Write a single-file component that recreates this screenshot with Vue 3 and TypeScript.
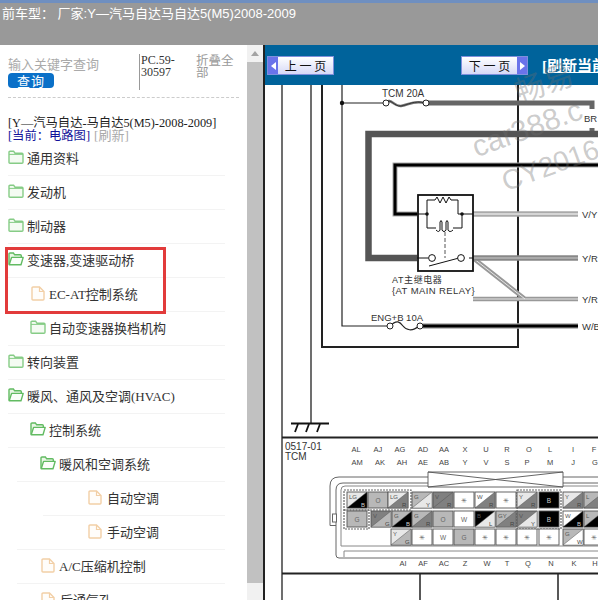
<script setup lang="ts">
interface Row { label: string; kind: 'open' | 'closed' | 'doc'; pad: number; gap: number; line: number }
const rows: Row[] = [
  { label: '通用资料', kind: 'closed', pad: 8, gap: 3, line: 8 },
  { label: '发动机', kind: 'closed', pad: 8, gap: 3, line: 8 },
  { label: '制动器', kind: 'closed', pad: 8, gap: 3, line: 8 },
  { label: '变速器,变速驱动桥', kind: 'open', pad: 8, gap: 3, line: 8 },
  { label: 'EC-AT控制系统', kind: 'doc', pad: 31, gap: 4, line: 17 },
  { label: '自动变速器换档机构', kind: 'closed', pad: 30, gap: 3, line: 8 },
  { label: '转向装置', kind: 'closed', pad: 8, gap: 3, line: 8 },
  { label: '暖风、通风及空调(HVAC)', kind: 'open', pad: 8, gap: 3, line: 8 },
  { label: '控制系统', kind: 'open', pad: 30, gap: 3, line: 8 },
  { label: '暖风和空调系统', kind: 'open', pad: 40, gap: 3, line: 17 },
  { label: '自动空调', kind: 'doc', pad: 88, gap: 5, line: 43 },
  { label: '手动空调', kind: 'doc', pad: 88, gap: 5, line: 17 },
  { label: 'A/C压缩机控制', kind: 'doc', pad: 41, gap: 4, line: 17 },
  { label: '后通气孔', kind: 'doc', pad: 41, gap: 5, line: 17 },
]

const topLabels = [
  ['AL', 356, 449], ['AJ', 378, 449], ['AG', 400, 449], ['AD', 423, 449], ['AA', 444, 449], ['X', 465, 449],
  ['U', 486, 449], ['R', 507, 449], ['O', 529, 449], ['L', 550, 449], ['I', 573, 449], ['F', 594, 449],
  ['AM', 357, 462], ['AK', 380, 462], ['AH', 402, 462], ['AE', 423, 462], ['AB', 444, 462], ['Y', 465, 462],
  ['V', 486, 462], ['S', 507, 462], ['P', 527, 462], ['M', 550, 462], ['J', 573, 462], ['G', 595, 462],
  ['AI', 403, 563], ['AF', 423, 563], ['AC', 444, 563], ['Z', 465, 563], ['W', 487, 563], ['T', 507, 563],
  ['Q', 528, 563], ['N', 551, 563], ['K', 574, 563], ['H', 595, 563],
] as [string, number, number][]

interface Cell { x: number; y: number; a: string; b?: string; la: string; lb?: string }
const c = { w: '#fff', lg: '#e8e8e8', g: '#b8b8b8', d: '#808080', k: '#000' }
const R1 = 492, R2 = 511, R3 = 529
const cells: Cell[] = [
  { x: 347, y: R1, a: c.lg, b: c.k, la: 'LG', lb: 'B' },
  { x: 368, y: R1, a: c.g, la: 'O' },
  { x: 388, y: R1, a: c.lg, b: c.d, la: 'LG', lb: 'R' },
  { x: 412, y: R1, a: c.g, b: c.lg, la: 'G', lb: 'Y' },
  { x: 433, y: R1, a: c.d, b: c.d, la: 'V', lb: 'R' },
  { x: 454, y: R1, a: c.w, la: '✳' },
  { x: 475, y: R1, a: c.w, b: c.d, la: 'W', lb: 'R' },
  { x: 496, y: R1, a: c.w, la: '✳' },
  { x: 517, y: R1, a: c.lg, b: c.d, la: 'Y', lb: 'R' },
  { x: 539, y: R1, a: c.k, la: 'B' },
  { x: 563, y: R1, a: c.lg, b: c.d, la: 'Y', lb: 'R' },
  { x: 584, y: R1, a: c.g, b: c.d, la: 'L', lb: 'R' },
  { x: 347, y: R2, a: c.g, la: 'G' },
  { x: 371, y: R2, a: c.d, b: c.g, la: 'V', lb: 'G' },
  { x: 392, y: R2, a: c.g, b: c.k, la: 'G', lb: 'B' },
  { x: 412, y: R2, a: c.g, b: c.d, la: 'G', lb: 'R' },
  { x: 433, y: R2, a: c.g, la: 'O' },
  { x: 454, y: R2, a: c.w, la: 'W' },
  { x: 475, y: R2, a: c.k, b: c.lg, la: 'B', lb: 'L' },
  { x: 496, y: R2, a: c.g, b: c.d, la: 'GY', lb: 'R' },
  { x: 517, y: R2, a: c.d, b: c.lg, la: 'V', lb: 'Y' },
  { x: 539, y: R2, a: c.k, la: 'B' },
  { x: 563, y: R2, a: c.w, b: c.k, la: 'W', lb: 'B' },
  { x: 584, y: R2, a: c.g, b: c.k, la: 'L', lb: 'B' },
  { x: 391, y: R3, a: c.lg, b: c.g, la: 'Y', lb: 'G' },
  { x: 412, y: R3, a: c.w, la: '✳' },
  { x: 433, y: R3, a: c.w, la: 'W' },
  { x: 454, y: R3, a: c.g, la: 'G' },
  { x: 475, y: R3, a: c.w, la: '✳' },
  { x: 496, y: R3, a: c.w, la: '✳' },
  { x: 517, y: R3, a: c.w, la: '✳' },
  { x: 539, y: R3, a: c.w, la: '✳' },
  { x: 563, y: R3, a: c.g, b: c.w, la: 'G', lb: 'W' },
  { x: 584, y: R3, a: c.w, la: '✳' },
]
const W = 20
const H = 16
</script>

<template>
  <div class="page">
    <header class="topbar">
      <span class="cartype">前车型： 厂家:Y—汽马自达马自达5(M5)2008-2009</span>
    </header>
    <div class="body">
      <aside class="side">
        <div class="side-inner">
          <div class="tools">
            <div class="search">
              <div class="ph">输入关键字查询</div>
              <button class="query">查询</button>
            </div>
            <div class="pc">PC.59-30597</div>
            <div class="fold">折叠全部</div>
          </div>
          <div class="crumbs">
            <div class="model">[Y—汽马自达-马自达5(M5)-2008-2009]</div>
            <div class="now"><span class="cur">[当前：电路图]</span> <span class="ref">[刷新]</span></div>
          </div>
          <ul class="tree">
            <li v-for="r in rows" :key="r.label" class="row" :style="{ paddingLeft: r.pad + 'px', gap: r.gap + 'px' }">
              <i class="rule" :style="{ left: r.line + 'px' }"></i>
              <svg v-if="r.kind === 'closed'" class="ic" width="16" height="14" viewBox="0 0 16 14">
                <path d="M1 12.2V2.2q0-1 1-1h3.600l1.400 2h7q1 0 1 1v8q0 1-1 1H2q-1 0-1-1Z" fill="#f4fbf2" stroke="#86cc86" stroke-width="1.400" />
                <path d="M1 4.400h14" stroke="#86cc86" stroke-width="1" />
              </svg>
              <svg v-else-if="r.kind === 'open'" class="ic" width="16" height="14" viewBox="0 0 16 14">
                <path d="M1 12.500V2q0-1 1-1h3.400l1.300 1.800h5.600q1 0 1 1V5" fill="#eaf7e6" stroke="#62bb62" stroke-width="1.400" />
                <path d="M1.200 12.800 3.600 5.400h11.600l-2.200 7.400Z" fill="#fbfefa" stroke="#62bb62" stroke-width="1.400" stroke-linejoin="round" />
              </svg>
              <svg v-else class="ic" width="14" height="15" viewBox="0 0 14 15">
                <path d="M1 2q0-1 1-1h6.500L13 5.500V13q0 1-1 1H2q-1 0-1-1Z" fill="#fffdfa" stroke="#f2cfa6" stroke-width="1.400" />
                <path d="M8.500 1v4.500H13" fill="none" stroke="#f2cfa6" stroke-width="1.200" />
              </svg>
              <span class="lb">{{ r.label }}</span>
            </li>
          </ul>
        </div>
        <div class="red-box"></div>
        <div class="scroll">
          <span class="up"></span>
          <span class="thumb"></span>
        </div>
      </aside>

      <main class="main">
        <div class="nav">
          <button class="pg prev"><span class="tip"><i class="arr l"></i></span><span class="pt">上 一 页</span></button>
          <button class="pg next"><span class="pt">下 一 页</span><span class="tip"><i class="arr r"></i></span></button>
          <a class="refresh">[刷新当前</a>
        </div>
        <svg class="diagram" width="333" height="515" viewBox="265 85 333 515">
          <g fill="none" stroke="#222">
            <path d="M282 85V600M311 85V424" stroke-width="1.300" />
            <path d="M322 85V347H518V85" stroke-width="2" />
            <path d="M342 85V326H388" stroke-width="1.200" />
            <path d="M342 103H383" stroke-width="1.200" />
          </g>
          <circle cx="342" cy="103" r="2.200" fill="#111" />
          <text x="382" y="97" class="t" font-size="10">TCM 20A</text>

          <!-- upper fuse -->
          <path d="M427 103H592V109M592 128V136" fill="none" stroke="#666" stroke-width="5" />
          <path d="M385 103c6-6 9 4 16 3s13-6 24-3" fill="none" stroke="#777" stroke-width="2.600" />
          <path d="M385 103c6-6 9 4 16 3s13-6 24-3" fill="none" stroke="#333" stroke-width="1" />
          <circle cx="386" cy="103" r="3" fill="#fff" stroke="#222" />
          <circle cx="426" cy="103" r="3" fill="#fff" stroke="#222" />
          <text x="584" y="122" class="t" font-size="9.500">BR</text>

          <!-- harness wires -->
          <path d="M598 134H368.500V258H417" fill="none" stroke="#555" stroke-width="6.500" />
          <path d="M598 165H395V214H417" fill="none" stroke="#aaa" stroke-width="5" />
          <path d="M598 165H395V214H417" fill="none" stroke="#000" stroke-width="3" />
          <path d="M473 214H578" fill="none" stroke="#aaa" stroke-width="5.500" />
          <path d="M473 214H578" fill="none" stroke="#fff" stroke-width="1.200" />
          <path d="M473 299H578M473 258L525 299" fill="none" stroke="#999" stroke-width="4.500" />
          <path d="M473 299H578M473 258L525 299" fill="none" stroke="#e6e6e6" stroke-width="1" />
          <path d="M473 258H578" fill="none" stroke="#888" stroke-width="5.500" />
          <path d="M473 258H578" fill="none" stroke="#ccc" stroke-width="1.200" />
          <path d="M423 326H578" fill="none" stroke="#aaa" stroke-width="5.500" />
          <path d="M423 326H578" fill="none" stroke="#000" stroke-width="2.800" />
          <text x="582" y="218" class="t" font-size="9.500">V/Y</text>
          <text x="582" y="262" class="t" font-size="9.500">Y/R</text>
          <text x="582" y="303" class="t" font-size="9.500">Y/R</text>
          <text x="582" y="330" class="t" font-size="9.500">W/B</text>

          <!-- relay -->
          <rect x="418" y="195" width="55" height="76" fill="#fff" stroke="#111" stroke-width="1.800" />
          <path d="M417 214H427V200H435l2-3 3 6 3-6 3 6 3-6 2 3h7V214H473M427 214V228H436M462 214V228H453" fill="none" stroke="#111" stroke-width="1" />
          <path d="M436 230c2 2 3 2 4 0V222q1-3 2 0v8c1 2 3 2 4 0v-8q1-3 2 0v8c1 2 3 2 5 0" fill="none" stroke="#111" />
          <circle cx="427" cy="214" r="1.800" fill="#111" />
          <circle cx="462" cy="214" r="1.800" fill="#111" />
          <path d="M445 232V258" stroke="#555" stroke-dasharray="4 2" />
          <path d="M417 258H428M469 258H473M429 266L459 258" stroke="#111" />
          <circle cx="432" cy="258" r="3.400" fill="#fff" stroke="#111" />
          <circle cx="461" cy="258" r="3.400" fill="#fff" stroke="#111" />
          <text x="392" y="283" class="t" font-size="9" letter-spacing=".6">AT主继电器</text>
          <text x="392" y="294" class="t" font-size="9.500" letter-spacing=".4">{AT MAIN RELAY}</text>
          <text x="371" y="321" class="t" font-size="9.500">ENG+B 10A</text>
          <path d="M390 326c7-7 10-4 13 0s9 6 16 0" fill="none" stroke="#222" stroke-width="1.200" />
          <circle cx="390" cy="326" r="3" fill="#fff" stroke="#222" />
          <circle cx="420" cy="326" r="3" fill="#fff" stroke="#222" />

          <!-- ground + connector frame -->
          <path d="M291 423.500H329" stroke="#111" stroke-width="1.800" fill="none" />
          <path d="M298 424l-3 8M309 424l-3 8M320 424l-3 8" stroke="#111" stroke-width="1.800" fill="none" />
          <path d="M282 437.500H598M282 573.500H598" stroke="#222" stroke-width="1.800" />
          <path d="M420 573V600M558 573V600" stroke="#222" stroke-width="1.500" />
          <text x="285" y="450" class="t" font-size="10">0517-01</text>
          <text x="285" y="459.500" class="t" font-size="10">TCM</text>
          <text v-for="l in topLabels" :key="l[0]" :x="l[1]" :y="l[2] + 2.500" class="lbl" text-anchor="middle" font-size="7.500">{{ l[0] }}</text>

          <!-- connector outline -->
          <path d="M598 477H339q-9 0-9 9v39.500h6" fill="none" stroke="#666" stroke-width="1" />
          <path d="M598 483H343q-7 0-7 7v65q0 3 3 3H598" fill="none" stroke="#666" stroke-width="1" />
          <path d="M598 486H345q-4 0-4 4V546H598M598 551H344V557" fill="none" stroke="#888" stroke-width="1" />
          <rect x="332.500" y="514" width="4" height="8" fill="#fff" stroke="#666" />
          <path d="M428 472H563V487H428ZM428 472L563 487M563 472L428 487" fill="#fff" stroke="#555" stroke-width=".9" />
          <rect x="344" y="490" width="67" height="20" fill="none" stroke="#666" stroke-dasharray="2 1" stroke-width="1.200" />
          <rect x="344" y="510" width="25" height="19" fill="none" stroke="#666" stroke-dasharray="2 1" stroke-width="1.200" />
          <rect x="517" y="490" width="44" height="39" fill="none" stroke="#666" stroke-dasharray="2 1" stroke-width="1.200" />

          <g v-for="(g, i) in cells" :key="i">
            <rect :x="g.x" :y="g.y" :width="W" :height="H" :fill="g.a" stroke="#555" stroke-width=".9" />
            <path v-if="g.b" :d="`M${g.x + W} ${g.y}V${g.y + H}H${g.x}Z`" :fill="g.b" stroke="#555" stroke-width=".5" />
            <text v-if="g.b" :x="g.x + 2" :y="g.y + 7" class="cl" fill="#555" font-size="6">{{ g.la }}</text>
            <text v-if="g.b" :x="g.x + W - 6" :y="g.y + H - 1.500" class="cl" :fill="g.b === c.k ? '#ccc' : '#444'" font-size="6">{{ g.lb }}</text>
            <text v-if="!g.b" :x="g.x + W / 2" :y="g.y + 11" class="cl" text-anchor="middle" :fill="g.a === c.k ? '#ccc' : '#666'" font-size="6.500">{{ g.la }}</text>
          </g>
        </svg>
        <div class="mark m1">畅易</div>
        <div class="mark m2">car388.c</div>
        <div class="mark m3">CY2016</div>
      </main>
    </div>
  </div>
</template>

<style scoped>
.page { width: 598px; height: 600px; overflow: hidden; display: flex; flex-direction: column; background: #fff; font-family: "Liberation Serif", "Noto Sans CJK SC", serif; }
.topbar { height: 45px; flex: none; box-sizing: border-box; background: #999; border-top: 3px solid #6f8fc0; padding: 2px 0 0 2px; color: #fff; font: 13px/18px "Liberation Sans", "Noto Sans CJK SC", sans-serif; white-space: nowrap; overflow: hidden; }
.body { flex: 1; display: flex; min-height: 0; }
.side { width: 263px; flex: none; display: flex; position: relative; overflow: hidden; }
.side-inner { width: 247px; flex: none; box-sizing: border-box; }
.tools { display: flex; height: 52px; margin-top: 9px; align-items: flex-start; padding: 0 8px; box-sizing: content-box; }
.search { width: 131px; flex: none; padding-top: 3px; }
.ph { font-size: 13px; line-height: 16px; color: #aaa; }
.query { display: block; width: 46px; height: 15px; padding: 0; border: 0; border-radius: 4px; background: #0a70c8; color: #fff; font: 13px/15px "Noto Sans CJK SC", sans-serif; letter-spacing: 1px; }
.pc { width: 38px; height: 36px; flex: none; border-left: 1px solid #999; padding-left: 1px; box-sizing: border-box; color: #333; font-size: 12px; line-height: 12px; word-break: break-word; }
.fold { width: 40px; flex: none; margin-left: 19px; padding-top: 1px; color: #999; font-size: 12.500px; line-height: 12px; }
.crumbs { margin: -9px 8px 0; border-top: 1px dashed #ccc; padding-top: 19px; font-size: 12.300px; line-height: 12px; color: #222; white-space: nowrap; }
.now { position: relative; top: 1px; }
.cur { color: #11119a; }
.ref { color: #aaa; margin-left: 1px; font-size: 13px; }
.tree { list-style: none; margin: 0; padding: 0; }
.row { height: 34px; display: flex; align-items: center; position: relative; font-size: 13px; color: #333; white-space: nowrap; top: -1px; }
.rule { position: absolute; right: 22px; bottom: -2px; border-top: 1px solid #f3f3f3; }
.ic { flex: none; }
.red-box { position: absolute; left: 5px; top: 202px; width: 161px; height: 67px; box-sizing: border-box; border: 3px solid #e23b3b; pointer-events: none; }
.scroll { width: 16px; flex: none; background: #f1f1f1; position: relative; }
.up { position: absolute; left: 4px; top: 6px; border: 4px solid transparent; border-top: 0; border-bottom: 5px solid #a3a3a3; }
.thumb { position: absolute; left: 0; right: 0; top: 17px; height: 521px; background: #c1c1c1; }
.main { flex: 1; border-left: 2px solid #222; position: relative; overflow: hidden; }
.nav { height: 40px; background: #00639b; position: relative; }
.pg { position: absolute; top: 11px; height: 19px; width: 67px; padding: 0; display: flex; align-items: stretch; border: 1px solid #7f8fdc; background: linear-gradient(#fff, #d6d9f7); color: #111; font: 12px/17px "Noto Sans CJK SC", sans-serif; }
.prev { left: 2px; }
.next { left: 196px; }
.pt { flex: 1; text-align: center; white-space: nowrap; }
.tip { width: 10px; background: #6a73ea; display: flex; align-items: center; justify-content: center; }
.arr { border: 4px solid transparent; }
.arr.l { border-left: 0; border-right: 5px solid #fff; }
.arr.r { border-right: 0; border-left: 5px solid #fff; }
.refresh { position: absolute; left: 277px; top: 11px; color: #fff; font-weight: 700; font-size: 15px; line-height: 20px; text-decoration: underline; white-space: nowrap; }
.diagram { display: block; }
.t { font-family: "Liberation Sans", "Noto Sans CJK SC", sans-serif; fill: #333; }
.lbl { font-family: "Liberation Sans", sans-serif; fill: #444; }
.cl { font-family: "Liberation Sans", sans-serif; }
.mark { position: absolute; color: rgba(110, 110, 110, .36); font: 30px/32px "Liberation Sans", "Noto Sans CJK SC", sans-serif; transform: rotate(-20deg); transform-origin: left center; white-space: nowrap; pointer-events: none; }
.m1 { left: 251px; top: 33px; }
.m2 { left: 208px; top: 87px; }
.m3 { left: 238px; top: 122px; font-size: 28px; }
</style>
